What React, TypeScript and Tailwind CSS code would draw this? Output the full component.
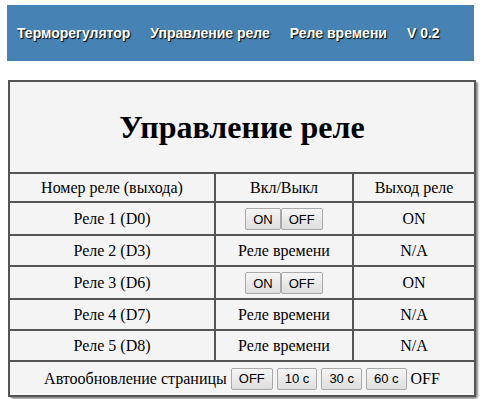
import React from "react";

const relays = [
  { name: "Реле 1 (D0)", mode: "buttons", out: "ON" },
  { name: "Реле 2 (D3)", mode: "timer", out: "N/A" },
  { name: "Реле 3 (D6)", mode: "buttons", out: "ON" },
  { name: "Реле 4 (D7)", mode: "timer", out: "N/A" },
  { name: "Реле 5 (D8)", mode: "timer", out: "N/A" },
];

const Btn = ({ children }: { children: React.ReactNode }) => (
  <button className="h-[22px] px-[7px] border border-[#a9a9a9] rounded-[2px] bg-gradient-to-b from-[#f6f6f6] to-[#dedede] text-[13px] leading-none text-black font-['Liberation_Sans',Arial,sans-serif]">
    {children}
  </button>
);

const cell = "border-2 border-[#555] text-center";

export default function App() {
  return (
    <div className="w-[482px] h-[399px] bg-white font-['Liberation_Serif','Times_New_Roman',serif] text-black">
      <div className="pt-[5px] pl-[7px] pr-[8px]">
        <nav className="h-[56px] bg-[#4682b4] flex items-center gap-[20px] pl-[10px] font-['Liberation_Sans',Arial,sans-serif] font-bold text-[14px] text-white [text-shadow:1px_1px_1px_#000]">
          <span>Терморегулятор</span>
          <span>Управление реле</span>
          <span>Реле времени</span>
          <span>V 0.2</span>
        </nav>
      </div>
      <div className="mt-[19px] ml-[8px] w-[468px] rounded-b-[4px] shadow-[2px_2px_2px_rgba(0,0,0,0.45)]">
        <table className="w-full border-collapse bg-[#f4f4f4] text-[16px]">
          <tbody>
            <tr>
              <td colSpan={3} className={`${cell} h-[92px] text-[32px] font-bold`}>
                Управление реле
              </td>
            </tr>
            <tr className="h-[29px]">
              <td className={`${cell} w-[206px]`}>Номер реле (выхода)</td>
              <td className={`${cell} w-[138px]`}>Вкл/Выкл</td>
              <td className={cell}>Выход реле</td>
            </tr>
            {relays.map((r, i) => (
              <tr key={r.name} className={i === 0 || i === 2 ? "h-[33px]" : "h-[31px]"}>
                <td className={cell}>{r.name}</td>
                <td className={cell}>
                  {r.mode === "buttons" ? (
                    <span className="inline-flex">
                      <Btn>ON</Btn>
                      <Btn>OFF</Btn>
                    </span>
                  ) : (
                    "Реле времени"
                  )}
                </td>
                <td className={cell}>{r.out}</td>
              </tr>
            ))}
            <tr className="h-[35px]">
              <td colSpan={3} className={cell}>
                <span className="inline-flex items-center gap-[4px]">
                  <span>Автообновление страницы</span>
                  <Btn>OFF</Btn>
                  <Btn>10 с</Btn>
                  <Btn>30 с</Btn>
                  <Btn>60 с</Btn>
                  <span>OFF</span>
                </span>
              </td>
            </tr>
          </tbody>
        </table>
      </div>
    </div>
  );
}
